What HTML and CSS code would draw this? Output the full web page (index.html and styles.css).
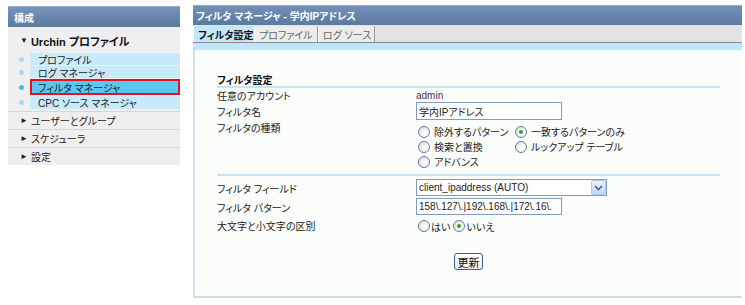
FILE: index.html
```html
<!DOCTYPE html>
<html lang="ja">
<head>
<meta charset="utf-8">
<title>フィルタ マネージャ</title>
<link rel="stylesheet" href="styles.css">
</head>
<body>
<div class="page">
  <aside class="sidebar">
    <div class="side-head">構成</div>
    <div class="side-group">
      <div class="side-title"><span class="tri">▼</span>Urchin プロファイル</div>
      <ul class="side-items">
        <li><span class="dot-col"><span class="dot"></span></span><span class="lbl">プロファイル</span></li>
        <li><span class="dot-col"><span class="dot"></span></span><span class="lbl">ログ マネージャ</span></li>
        <li class="sel"><span class="dot-col"><span class="dot"></span></span><span class="lbl">フィルタ マネージャ</span></li>
        <li class="last"><span class="dot-col"><span class="dot"></span></span><span class="lbl">CPC ソース マネージャ</span></li>
      </ul>
    </div>
    <div class="side-nav"><span class="tri">►</span>ユーザーとグループ</div>
    <div class="side-nav"><span class="tri">►</span>スケジューラ</div>
    <div class="side-nav"><span class="tri">►</span>設定</div>
  </aside>

  <main class="main">
    <div class="main-head">フィルタ マネージャ - 学内IPアドレス</div>
    <div class="tabs">
      <span class="tab active">フィルタ設定</span>
      <span class="tab t2">プロファイル</span>
      <span class="tab t3">ログ ソース</span>
    </div>
    <div class="band"></div>
    <div class="content">
      <div class="sec-title">フィルタ設定</div>

      <div class="row r-account">
        <div class="lab">任意のアカウント</div>
        <div class="val admin">admin</div>
      </div>

      <div class="row r-name">
        <div class="lab">フィルタ名</div>
        <div class="val"><span class="txt">学内IPアドレス</span></div>
      </div>

      <div class="row r-type">
        <div class="lab">フィルタの種類</div>
        <div class="radios">
          <span class="opt"><span class="radio"></span>除外するパターン</span>
          <span class="opt"><span class="radio on"></span>一致するパターンのみ</span>
          <span class="opt"><span class="radio"></span>検索と置換</span>
          <span class="opt"><span class="radio"></span>ルックアップ テーブル</span>
          <span class="opt"><span class="radio"></span>アドバンス</span>
        </div>
      </div>

      <div class="sep"></div>

      <div class="row r-field">
        <div class="lab">フィルタ フィールド</div>
        <div class="val">
          <span class="select">client_ipaddress (AUTO)
            <span class="arrow"><svg width="9" height="6" viewBox="0 0 9 6"><path d="M1 1 L4.5 4.5 L8 1" fill="none" stroke="#4d6185" stroke-width="1.6"/></svg></span>
          </span>
        </div>
      </div>

      <div class="row r-pattern">
        <div class="lab">フィルタ パターン</div>
        <div class="val"><span class="txt">158\.127\.|192\.168\.|172\.16\.</span></div>
      </div>

      <div class="row r-case">
        <div class="lab">大文字と小文字の区別</div>
        <div class="val inline-radios">
          <span class="opt"><span class="radio"></span>はい</span>
          <span class="opt"><span class="radio on"></span>いいえ</span>
        </div>
      </div>

      <div class="btn-row"><span class="btn">更新</span></div>
    </div>
  </main>
</div>
</body>
</html>
```

FILE: styles.css
```css
* { box-sizing: border-box; }

body {
  margin: 0;
  background: #fff;
  font-family: "Liberation Sans", "Noto Sans CJK JP", sans-serif;
  font-size: 10px;
  color: #222;
  font-feature-settings: "palt";
}

.page {
  display: flex;
  align-items: flex-start;
  gap: 13px;
  padding: 5px 0 0 8px;
}

/* ---------- sidebar ---------- */
.sidebar {
  width: 172px;
  margin-top: 1px;
}

.side-head {
  height: 21px;
  display: flex;
  align-items: center;
  padding-left: 6px;
  color: #fff;
  font-weight: bold;
  background: linear-gradient(#7694bb, #5b7ba1);
  border-top: 1px solid #8fa9c9;
}

.side-group {
  background: #efefef;
  padding-bottom: 2px;
}

.side-title {
  height: 26px;
  padding: 1px 0 0 12px;
  display: flex;
  align-items: center;
  font-weight: bold;
  font-size: 11px;
  color: #111;
}

.tri {
  font-size: 8px;
  margin-right: 3px;
  color: #222;
}

.side-items {
  list-style: none;
  margin: 0;
  padding: 0;
  display: flex;
  flex-direction: column;
  gap: 1px;
}

.side-items li {
  display: flex;
  height: 12px;
}

.side-items li.last { height: 13px; }

.dot-col {
  width: 22px;
  display: flex;
  align-items: center;
  justify-content: flex-end;
  padding-right: 6px;
}

.dot {
  width: 5px;
  height: 5px;
  border-radius: 50%;
  background: #a9daf3;
}

.lbl {
  flex: 1;
  background: #c8eafb;
  padding-left: 8px;
  display: flex;
  align-items: center;
}

.side-items li.sel { height: 16px; }
.side-items li.sel .dot { background: #4db8ec; }
.side-items li.sel .lbl {
  background: #5cc6f3;
  border: 2px solid #e3131b;
  padding-left: 6px;
}

.side-nav {
  height: 18px;
  border-top: 1px solid #d6d6d6;
  background: #efefef;
  padding-left: 12px;
  display: flex;
  align-items: center;
}

/* ---------- main ---------- */
.main { width: 549px; }

.main-head {
  height: 20px;
  background: linear-gradient(#7191b9, #5a7a9f);
  border-top: 1px solid #93acca;
  color: #fff;
  font-weight: bold;
  padding-left: 3px;
  display: flex;
  align-items: center;
}

.tabs {
  height: 18px;
  background: #e3e3e3;
  border-bottom: 1px solid #8a8a8a;
  display: flex;
  padding-top: 1px;
}

.tab {
  display: flex;
  align-items: center;
  padding-left: 4px;
  color: #666;
  background: #ececec;
  border-left: 1px solid #fff;
  border-right: 1px solid #9a9a9a;
}

.tab.active {
  width: 61px;
  background: #c3e8fb;
  color: #111;
  font-weight: bold;
  border-right: none;
}
.tab.t2 { width: 64px; }
.tab.t3 { width: 57px; }

.band {
  height: 7px;
  background: #bfe7fb;
}

.content {
  height: 248px;
  background: #fbfdfb;
  border-left: 2px solid #d3e0eb;
  border-bottom: 2px solid #cfdce8;
  padding: 22px 22px 0 22px;
}

.sec-title {
  height: 16px;
  border-bottom: 2px solid #c2e5f7;
  font-weight: bold;
  display: flex;
  align-items: center;
  color: #111;
}

.row {
  display: grid;
  grid-template-columns: 199px 1fr;
}

.lab { color: #222; }

.r-account { height: 14px; align-items: center; }
.admin { color: #4a3158; }

.r-name { height: 18px; align-items: center; }

.txt {
  width: 146px;
  height: 18px;
  border: 1px solid #7f9db9;
  background: #fff;
  padding: 0 2px;
  display: flex;
  align-items: center;
  color: #222;
  overflow: hidden;
  white-space: nowrap;
}

.r-type { margin-top: 2px; }
.r-type .lab { line-height: 13px; }

.radios {
  display: grid;
  grid-template-columns: 97px auto;
  grid-auto-rows: 15px;
  margin-top: 2px;
  padding-left: 2px;
}

.opt {
  display: flex;
  align-items: center;
}

.radio {
  width: 12px;
  height: 12px;
  border: 1px solid #5f7fa6;
  border-radius: 50%;
  background: radial-gradient(circle at 65% 65%, #fff 0, #f2f2ee 45%, #d6d6cf 100%);
  margin-right: 4px;
  display: flex;
  align-items: center;
  justify-content: center;
  flex: none;
}

.radio.on::after {
  content: "";
  width: 4px;
  height: 4px;
  border-radius: 50%;
  background: #2da52d;
}

.sep {
  height: 2px;
  background: #c2e5f7;
  margin-top: 5px;
}

.r-field { margin-top: 3px; }
.r-field .lab, .r-pattern .lab { padding-top: 2px; }

.select {
  width: 191px;
  height: 17px;
  border: 1px solid #7f9db9;
  background: #fff;
  padding-left: 2px;
  display: flex;
  align-items: center;
  justify-content: space-between;
  color: #222;
}

.arrow {
  width: 15px;
  height: 15px;
  background: linear-gradient(#eaf1fd, #c4d5fb);
  border: 1px solid #b4c7ef;
  border-radius: 2px;
  display: flex;
  align-items: center;
  justify-content: center;
}

.r-pattern { margin-top: 2px; }
.r-pattern .txt { height: 17px; }

.r-case { margin-top: 3px; height: 16px; }
.r-case .lab { padding-top: 0; }

.inline-radios {
  display: flex;
  align-items: center;
  padding-left: 2px;
  gap: 3px;
}
.inline-radios .radio { margin-right: 1px; }

.btn-row {
  display: flex;
  justify-content: center;
  margin-top: 19px;
}

.btn {
  width: 29px;
  height: 17px;
  border: 1px solid #3c5d95;
  border-radius: 3px;
  background: linear-gradient(#ffffff, #ecebe4);
  display: flex;
  align-items: center;
  justify-content: center;
  font-size: 11px;
  color: #111;
}
```
